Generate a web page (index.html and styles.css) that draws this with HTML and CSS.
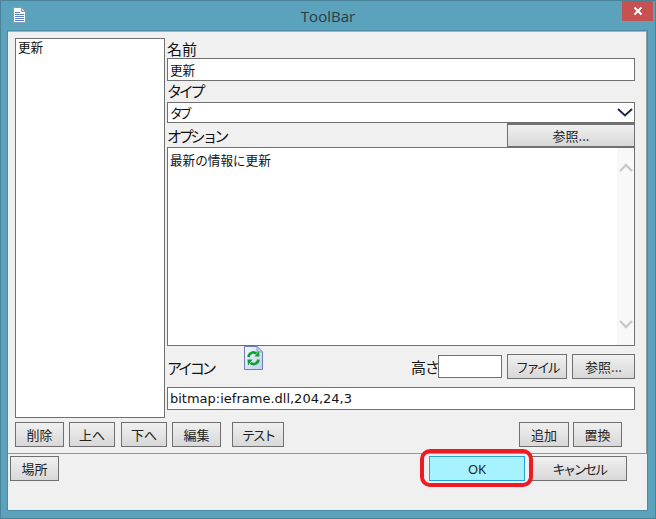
FILE: index.html
```html
<!DOCTYPE html>
<html lang="ja">
<head>
    <meta charset="UTF-8">
    <title>ToolBar</title>
    <link rel="stylesheet" href="styles.css">
</head>
<body>
    <div class="window">
        <div class="titlebar">
            <div class="title-left">
                <svg class="doc-icon" width="14" height="16" viewBox="0 0 14 16">
                    <path d="M1.5 .5H9.5L13.5 4.5V15.5H1.5Z" fill="#fff" stroke="#8d9aa6"/>
                    <path d="M9.5 .5V4.5H13.5Z" fill="#d5dde6" stroke="#8d9aa6"/>
                    <path d="M3 5.5H8M3 7.5H12M3 9.5H12M3 11.5H12M3 13.5H12" stroke="#5b82c0"/>
                </svg>
            </div>
            <div class="title-text">ToolBar</div>
            <div class="title-right">
                <div class="close-btn">
                    <svg width="10" height="10" viewBox="0 0 10 10">
                        <path d="M1.5 1.5L8.5 8.5M8.5 1.5L1.5 8.5" stroke="#fff" stroke-width="2"/>
                    </svg>
                </div>
            </div>
        </div>
        <div class="client">
            <div class="panel">
                <div class="panel-main">
                    <div class="list"><div class="list-item">更新</div></div>
                    <div class="form">
                        <div class="label label-name">名前</div>
                        <div class="field field-name">更新</div>
                        <div class="label label-type kana">タイプ</div>
                        <div class="field field-type">
                            <span class="kana-tab">タブ</span>
                            <svg width="16" height="9" viewBox="0 0 16 9">
                                <path d="M1 1L8 7.5L15 1" fill="none" stroke="#1c2a44" stroke-width="2"/>
                            </svg>
                        </div>
                        <div class="option-row">
                            <div class="label kana">オプション</div>
                            <button class="btn btn-browse">参照...</button>
                        </div>
                        <div class="memo">
                            <div class="memo-text">最新の情報に更新</div>
                            <div class="scrollbar">
                                <svg width="14" height="9" viewBox="0 0 14 9">
                                    <path d="M1 8L7 2L13 8" fill="none" stroke="#c9c9c9" stroke-width="2.4"/>
                                </svg>
                                <svg width="14" height="9" viewBox="0 0 14 9">
                                    <path d="M1 1L7 7L13 1" fill="none" stroke="#c9c9c9" stroke-width="2.4"/>
                                </svg>
                            </div>
                        </div>
                        <div class="icon-row">
                            <div class="label label-icon kana">アイコン</div>
                            <svg class="preview" width="19" height="24" viewBox="0 0 19 24">
                                <defs>
                                    <linearGradient id="page" x1="0" y1="0" x2="1" y2="1">
                                        <stop offset="0" stop-color="#f4f8ff"/>
                                        <stop offset="1" stop-color="#bcd0f2"/>
                                    </linearGradient>
                                </defs>
                                <path d="M.5 .5H13L18.5 6V23.5H.5Z" fill="url(#page)" stroke="#6f7fb5"/>
                                <path d="M13 .5V6H18.5Z" fill="#c3d0ec" stroke="#8c9ccb"/>
                                <path d="M4.5 11A5 5 0 0 1 12.5 7.5" fill="none" stroke="#0ea02c" stroke-width="2.6"/>
                                <path d="M10.5 10.5L15.5 10.5L15 5Z" fill="#0ea02c"/>
                                <path d="M14.5 13.5A5 5 0 0 1 6.5 17" fill="none" stroke="#0ea02c" stroke-width="2.6"/>
                                <path d="M8.5 13.5L3.5 13.5L4 19.5Z" fill="#0ea02c"/>
                            </svg>
                            <div class="label label-height">高さ</div>
                            <div class="field field-height"></div>
                            <button class="btn btn-file kana-small">ファイル</button>
                            <button class="btn btn-ref">参照...</button>
                        </div>
                        <div class="field field-bitmap">bitmap:ieframe.dll,204,24,3</div>
                    </div>
                </div>
                <div class="action-row">
                    <button class="btn w49">削除</button>
                    <button class="btn w46">上へ</button>
                    <button class="btn w46 gap-6">下へ</button>
                    <button class="btn w49">編集</button>
                    <button class="btn w52 gap-11 kana-small">テスト</button>
                    <button class="btn w50 push">追加</button>
                    <button class="btn w49 gap-4">置換</button>
                </div>
            </div>
            <div class="footer">
                <button class="btn w49">場所</button>
                <div class="ok-wrap">
                    <button class="btn btn-ok">OK</button>
                    <div class="ok-ring"></div>
                </div>
                <button class="btn btn-cancel kana-small">キャンセル</button>
            </div>
        </div>
    </div>
</body>
</html>
```

FILE: styles.css
```css
:root {
    --frame: #5ba3bd;
    --edge: #707070;
    --panel: #f0f0f0;
}

* {
    box-sizing: border-box;
}

body {
    margin: 0;
    font-family: "Noto Sans CJK JP", "Noto Sans", sans-serif;
    font-size: 12.6px;
    color: #111;
}

.window {
    width: 656px;
    height: 519px;
    background: var(--frame);
    border: 1px solid #4a8298;
    display: flex;
    flex-direction: column;
    padding: 0 7px 7px 6px;
}

.titlebar {
    height: 29px;
    margin: 0 -6px 0 -5px;
    display: grid;
    grid-template-columns: 1fr auto 1fr;
}

.title-left {
    padding: 6px 0 0 10px;
}

.doc-icon {
    display: block;
}

.title-text {
    font-family: "Open Sans", sans-serif;
    font-size: 15px;
    line-height: 31px;
    color: #2f3a40;
}

.title-right {
    display: flex;
    justify-content: flex-end;
}

.close-btn {
    width: 31px;
    height: 20px;
    margin-right: 1px;
    background: #c75050;
    display: flex;
    align-items: center;
    justify-content: center;
}

.client {
    flex: 1;
    background: var(--panel);
    border: 1px solid #4c8ba3;
    display: flex;
    flex-direction: column;
}

.panel {
    height: 423px;
    border-right: 1px solid #8e9aa0;
    border-bottom: 1px solid #8e9aa0;
    border-top: 1px solid #9fb4be;
    padding: 6px 0 0 7px;
}

.panel-main {
    display: flex;
    gap: 2px;
}

.list {
    width: 150px;
    height: 380px;
    background: #fff;
    border: 1px solid var(--edge);
    padding: 0 2px;
}

.list-item {
    line-height: 16px;
}

.form {
    width: 468px;
    display: flex;
    flex-direction: column;
}

.label {
    font-size: 15px;
    line-height: 20px;
    white-space: nowrap;
}

/* the original UI font has narrow kana, so squeeze ours to the same width */
.kana {
    letter-spacing: -3.2px;
}

.kana-small {
    letter-spacing: -2.4px;
}

.kana-tab {
    letter-spacing: -3px;
}

.label-name {
    height: 20px;
    margin-top: 1px;
}

.label-type {
    height: 21px;
}

.field {
    background: #fff;
    border: 1px solid var(--edge);
    padding: 0 2px;
    line-height: 21px;
}

.field-name {
    height: 23px;
    margin-top: -1px;
}

.field-type {
    height: 21px;
    line-height: 18px;
    display: flex;
    justify-content: space-between;
    align-items: center;
    padding-right: 0;
}

.field-type svg {
    margin-right: 1px;
}

.option-row {
    height: 25px;
    display: flex;
    justify-content: space-between;
    align-items: center;
}

.btn {
    font-family: inherit;
    font-size: 13px;
    color: #222;
    height: 25px;
    padding: 0;
    background: linear-gradient(#f0f0f0, #d8d8d8);
    border: 1px solid var(--edge);
    border-radius: 0;
}

.btn-browse {
    width: 128px;
    border-width: 2px 1px 2px 1px;
}

.memo {
    height: 199px;
    margin-top: -1px;
    background: #fff;
    border: 1px solid var(--edge);
    display: flex;
    justify-content: space-between;
}

.memo-text {
    padding: 3px 2px;
    line-height: 18px;
}

.scrollbar {
    width: 17px;
    background: #f8f8f8;
    display: flex;
    flex-direction: column;
    justify-content: space-between;
    align-items: center;
    padding: 15px 0 16px;
}

.icon-row {
    height: 41px;
    display: flex;
    align-items: center;
}

.label-icon {
    width: 77px;
    margin-top: 2px;
}

.preview {
    align-self: flex-start;
}

.label-height {
    margin-left: auto;
    letter-spacing: -1px;
}

.field-height {
    width: 64px;
    height: 23px;
    margin-left: -1px;
}

.btn-file {
    width: 60px;
    margin-left: 5px;
}

.btn-ref {
    width: 63px;
    margin-left: 5px;
}

.field-bitmap {
    height: 23px;
    font-size: 13px;
    font-family: "DejaVu Sans", sans-serif;
}

.action-row {
    width: 607px;
    margin-top: 4px;
    display: flex;
}

.w46 { width: 46px; }
.w49 { width: 49px; }
.w50 { width: 50px; }
.w52 { width: 52px; }

.action-row .btn {
    margin-left: 5px;
}

.action-row .btn:first-child {
    margin-left: 0;
}

.action-row .gap-4 { margin-left: 4px; }
.action-row .gap-6 { margin-left: 6px; }
.action-row .gap-11 { margin-left: 11px; }
.action-row .push { margin-left: auto; }

.footer {
    display: flex;
    padding: 2px 20px 0 2px;
}

.ok-wrap {
    position: relative;
    margin-left: auto;
}

.btn-ok {
    display: block;
    width: 96px;
    background: #a6f3ff;
    border-color: #2a9fd8;
    font-family: "Noto Sans", sans-serif;
}

.ok-ring {
    position: absolute;
    top: -7px;
    left: -9px;
    right: -8px;
    bottom: -6px;
    border: 4px solid #ed1c24;
    border-radius: 10px;
}

.btn-cancel {
    width: 96px;
    margin-left: 6px;
}
```
